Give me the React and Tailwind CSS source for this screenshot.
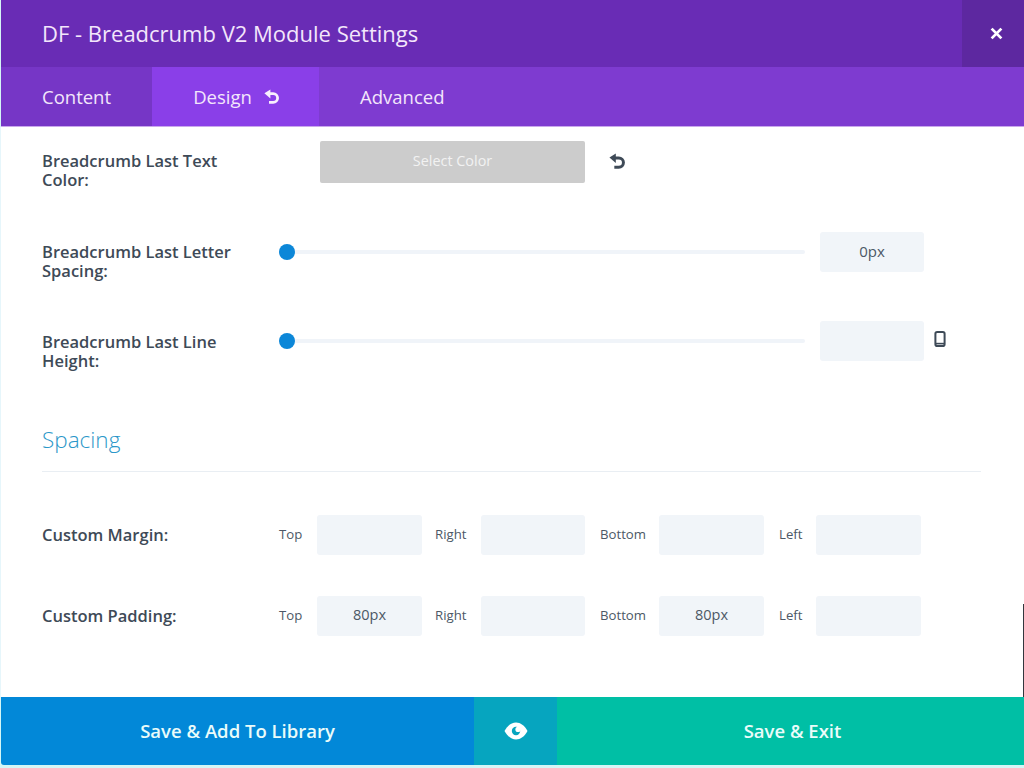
import React from "react";

const font = "font-['Open_Sans',sans-serif]";

const UndoIcon = ({ className }) => (
  <svg viewBox="0 0 16 16" className={className} fill="none">
    <path d="M5 4.6H9.2A4.4 4.4 0 0 1 9.2 13.4H5" stroke="currentColor" strokeWidth="2.8" />
    <path d="M0.4 4.2L6.4 0.4V9.4Z" fill="currentColor" />
  </svg>
);

const CloseIcon = () => (
  <svg viewBox="0 0 12 12" className="w-[13px] h-[13px] text-white" fill="none">
    <path d="M1.5 1.5L10.5 10.5M10.5 1.5L1.5 10.5" stroke="currentColor" strokeWidth="2.6" />
  </svg>
);

const EyeIcon = () => (
  <svg viewBox="0 0 24 18" className="w-[24px] h-[18px]">
    <path d="M0.5 9C3.5 3.4 7.6 0.5 12 0.5S20.5 3.4 23.5 9C20.5 14.6 16.4 17.5 12 17.5S3.5 14.6 0.5 9Z" fill="#fff" />
    <circle cx="12" cy="9" r="4.2" fill="#06a5bf" />
    <circle cx="14" cy="7.4" r="2.6" fill="#fff" />
  </svg>
);

const PhoneIcon = () => (
  <svg viewBox="0 0 12 16" className="w-[12px] h-[16px] text-[#3e4a57]" fill="none">
    <rect x="1.4" y="1" width="9.2" height="14" rx="1.8" stroke="currentColor" strokeWidth="2" />
    <path d="M2 12.6H10" stroke="currentColor" strokeWidth="1.6" />
  </svg>
);

const Label = ({ children, className = "" }) => (
  <div className={`text-[16.5px] leading-[19px] font-semibold text-[#3e4a57] ${className}`}>
    {children}
  </div>
);

const SliderRow = ({ label, value, icon, labelClass = "", className = "" }) => (
  <div className={`flex items-center h-[40px] ${className}`}>
    <Label className={`w-[230px] shrink-0 ${labelClass}`}>{label}</Label>
    <div className="relative ml-[7px] w-[526px] h-[4px] rounded-full bg-[#f0f4f9]">
      <span className="absolute left-0 top-[-6px] w-[16px] h-[16px] rounded-full bg-[#0c87d8]" />
    </div>
    <div className="ml-[15px] w-[104px] h-[40px] pb-[1px] rounded-[3px] bg-[#f1f5f9] flex items-center justify-center text-[15px] text-[#4c5866]">
      {value}
    </div>
    {icon && <div className="ml-[10px] mb-[4px]">{icon}</div>}
  </div>
);

const BoxInput = ({ value, className = "" }) => (
  <div className={`h-[40px] pb-[2px] rounded-[3px] bg-[#f1f5f9] flex items-center justify-center text-[14.5px] text-[#4c5866] ${className}`}>
    {value}
  </div>
);

const BoxLabel = ({ children, className = "" }) => (
  <span className={`text-[13.2px] text-[#4c5866] ${className}`}>{children}</span>
);

const SpacingRow = ({ label, top, bottom, className = "" }) => (
  <div className={`flex items-center h-[40px] ${className}`}>
    <Label className="w-[237px] shrink-0 pb-[2px]">{label}</Label>
    <BoxLabel className="w-[38px] shrink-0">Top</BoxLabel>
    <BoxInput value={top} className="w-[105px]" />
    <BoxLabel className="ml-[13px] w-[46px] shrink-0">Right</BoxLabel>
    <BoxInput className="w-[104px]" />
    <BoxLabel className="ml-[15px] w-[59px] shrink-0">Bottom</BoxLabel>
    <BoxInput value={bottom} className="w-[105px]" />
    <BoxLabel className="ml-[15px] w-[37px] shrink-0">Left</BoxLabel>
    <BoxInput className="w-[105px]" />
  </div>
);

export default function App() {
  return (
    <div className={`${font} relative w-[1024px] h-[768px] overflow-hidden bg-[#d4f6f6] flex flex-col`}>
      {/* Header */}
      <div className="h-[67px] shrink-0 ml-px bg-[#692cb5] flex items-center justify-between">
        <h1 className="pl-[41px] pb-[1px] text-[22px] font-normal text-[#f3e6fb]">
          DF - Breadcrumb V2 Module Settings
        </h1>
        <div className="w-[62px] h-full pl-[6px] bg-[#5d28a0] flex items-center justify-center">
          <CloseIcon />
        </div>
      </div>

      {/* Tabs */}
      <div className="h-[60px] shrink-0 ml-px bg-[#7e3bd0] border-b border-[#c9a8ec] flex text-[18.5px] text-[#f3e6fb]">
        <div className="w-[151px] bg-[#7636c6] pl-[41px] flex items-center">Content</div>
        <div className="w-[167px] pl-[2px] bg-[#8a3fe8] flex items-center justify-center gap-[12px]">
          Design
          <UndoIcon className="w-[16px] h-[16px] text-[#f8effd]" />
        </div>
        <div className="pl-[41px] flex items-center">Advanced</div>
      </div>

      {/* Body */}
      <div className="flex-1 bg-white border-l border-[#e6f6fb] pl-[41px] pt-[14px]">
        <div className="flex items-start h-[42px]">
          <Label className="w-[278px] shrink-0 mt-[10px]">
            Breadcrumb Last Text
            <br />
            Color:
          </Label>
          <div className="w-[265px] h-[42px] pb-[2px] rounded-[2px] bg-[#cccccc] flex items-center justify-center text-[14.4px] text-[#f2f2f2]">
            Select Color
          </div>
          <UndoIcon className="ml-[24px] mt-[12px] w-[17px] h-[17px] text-[#3e4a57]" />
        </div>

        <SliderRow
          className="mt-[49px]"
          labelClass="mt-[17px]"
          label={<>Breadcrumb Last Letter<br />Spacing:</>}
          value="0px"
        />
        <SliderRow
          className="mt-[49px]"
          labelClass="mt-[19px]"
          label={<>Breadcrumb Last Line<br />Height:</>}
          icon={<PhoneIcon />}
        />

        <h2 className="mt-[63px] text-[22.5px] leading-[32px] font-light text-[#2b97c9]">Spacing</h2>
        <div className="mt-[15px] w-[939px] h-px bg-[#e9eef3]" />

        <SpacingRow className="mt-[43px]" label="Custom Margin:" />
        <SpacingRow className="mt-[41px]" label="Custom Padding:" top="80px" bottom="80px" />
      </div>

      {/* Footer */}
      <div className="h-[68px] shrink-0 ml-px mb-[3px] flex text-[18.5px] font-semibold text-[#eafcfa]">
        <div className="w-[473px] rounded-bl-[3px] bg-[#0288d8] flex items-center justify-center">Save &amp; Add To Library</div>
        <div className="w-[83px] bg-[#06a5bf] flex items-center justify-center">
          <EyeIcon />
        </div>
        <div className="flex-1 pl-[4px] bg-[#00bfa5] flex items-center justify-center">Save &amp; Exit</div>
      </div>

      {/* page scrollbar edge showing behind the modal */}
      <span className="absolute right-0 top-[604px] w-px h-[93px] bg-[#33373d]" />
    </div>
  );
}
